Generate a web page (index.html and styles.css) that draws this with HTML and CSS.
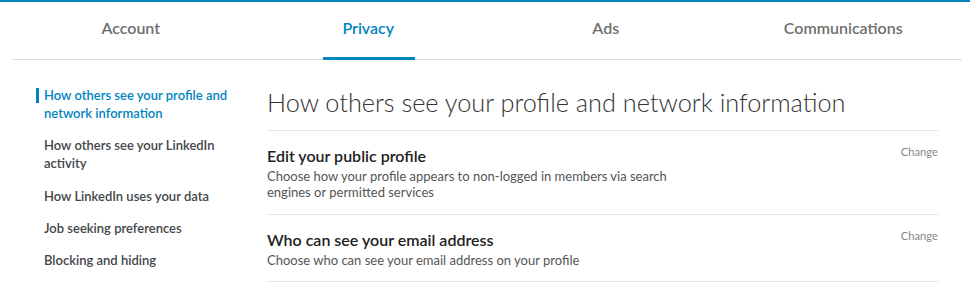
FILE: index.html
```html
<!DOCTYPE html>
<html>
<head>
<meta charset="utf-8">
<link rel="stylesheet" href="styles.css">
</head>
<body>
<div class="page">
  <nav class="tabs">
    <a class="tab">Account</a>
    <a class="tab active">Privacy</a>
    <a class="tab">Ads</a>
    <a class="tab">Communications</a>
  </nav>
  <div class="content">
    <aside class="sidebar">
      <a class="side-item active">How others see your profile and network information</a>
      <a class="side-item">How others see your LinkedIn activity</a>
      <a class="side-item">How LinkedIn uses your data</a>
      <a class="side-item">Job seeking preferences</a>
      <a class="side-item">Blocking and hiding</a>
    </aside>
    <main class="main">
      <h1 class="heading">How others see your profile and network information</h1>
      <div class="setting">
        <div class="setting-text">
          <h2 class="setting-title">Edit your public profile</h2>
          <p class="setting-desc">Choose how your profile appears to non-logged in members via search engines or permitted services</p>
        </div>
        <span class="change">Change</span>
      </div>
      <div class="setting">
        <div class="setting-text">
          <h2 class="setting-title">Who can see your email address</h2>
          <p class="setting-desc">Choose who can see your email address on your profile</p>
        </div>
        <span class="change">Change</span>
      </div>
    </main>
  </div>
</div>
</body>
</html>
```
FILE: styles.css
```css
* { box-sizing: border-box; }
html, body { margin: 0; padding: 0; background: #fff; }
body {
  font-family: "Lato", "Open Sans", sans-serif;
  color: #333;
}
.page {
  border-top: 2px solid #0084bf;
  width: 970px;
}
.tabs {
  display: grid;
  grid-template-columns: repeat(4, 1fr);
  margin: 0 8px 0 12px;
  border-bottom: 1px solid #dedede;
  height: 58px;
}
.tab {
  display: flex;
  align-items: center;
  justify-content: center;
  font-size: 16px;
  font-weight: 600;
  color: #6f6f6f;
  position: relative;
  padding-bottom: 6px;
}
.tab.active { color: #0084bf; }
.tab.active::after {
  content: "";
  position: absolute;
  left: 50%;
  transform: translateX(-50%);
  bottom: -1px;
  width: 92px;
  height: 3px;
  background: #0084bf;
  margin-left: 1px;
}
.content {
  display: flex;
  padding: 25px 32px 0 36px;
}
.sidebar {
  width: 231px;
  flex: none;
  display: flex;
  flex-direction: column;
  gap: 14.3px;
  padding-top: 1px;
}
.side-item {
  display: block;
  position: relative;
  padding: 0 10px 0 8px;
  font-size: 13px;
  font-weight: 600;
  line-height: 18px;
  color: #434649;
}
.side-item.active { color: #0084bf; }
.side-item.active::before {
  content: "";
  position: absolute;
  left: 0;
  top: 2px;
  width: 3px;
  height: 15px;
  background: #0084bf;
}
.main {
  flex: 1;
}
.heading {
  margin: 0;
  font-size: 25.3px;
  font-weight: 300;
  line-height: 30px;
  color: #333;
  padding: 2px 0 13px;
  border-bottom: 1px solid #e6e6e6;
}
.setting {
  display: flex;
  justify-content: space-between;
  border-bottom: 1px solid #e6e6e6;
  padding: 14px 0 14px;
}
.setting:last-child { padding-bottom: 13px; }
.setting-text { width: 420px; }
.setting-title {
  margin: 0;
  font-size: 16px;
  font-weight: 600;
  line-height: 22px;
  color: #222;
}
.setting-desc {
  margin: 1px 0 0;
  font-size: 13px;
  line-height: 16px;
  color: #555;
}
.change {
  font-size: 11.2px;
  color: #888;
  line-height: 16px;
  margin-top: -1px;
}
```
